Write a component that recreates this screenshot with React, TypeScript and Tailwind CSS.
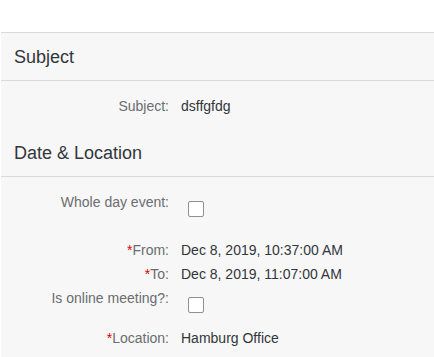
const font = { fontFamily: '"Liberation Sans", Arial, sans-serif' };

function Header({ title, top }: { title: string; top?: boolean }) {
  return (
    <div
      className={`h-[48px] flex items-center pl-[13px] pt-px border-b border-[#d9d9d9] text-[18px] text-[#32363a] ${top ? "border-t h-[49px]" : ""}`}
    >
      {title}
    </div>
  );
}

function Row({ label, value, required, checkbox, h }: { label: string; value?: string; required?: boolean; checkbox?: boolean; h: string }) {
  return (
    <div className={`flex items-start ${h}`}>
      <div className="w-[168px] text-right text-[14px] leading-[24px] text-[#6a6d70] pt-px">
        {required && <span className="text-[#e00000]">*</span>}
        {label}:
      </div>
      <div className="pl-3 text-[14px] leading-[24px] text-[#32363a] pt-px">
        {checkbox ? (
          <div className="mt-[11px] ml-[7px] w-4 h-4 rounded-[2px] border border-[#89919a] bg-white" />
        ) : (
          value
        )}
      </div>
    </div>
  );
}

export default function App() {
  return (
    <div className="w-[434px] h-[357px] bg-white pt-8 pl-px overflow-hidden" style={font}>
      <div className="bg-[#f7f7f7] h-[325px]">
        <Header title="Subject" top />
        <div className="py-3">
          <Row label="Subject" value="dsffgfdg" h="h-6" />
        </div>
        <Header title="Date & Location" />
        <div className="py-3">
          <Row label="Whole day event" checkbox h="h-12" />
          <Row label="From" value="Dec 8, 2019, 10:37:00 AM" required h="h-6" />
          <Row label="To" value="Dec 8, 2019, 11:07:00 AM" required h="h-6" />
          <Row label="Is online meeting?" checkbox h="h-10" />
          <Row label="Location" value="Hamburg Office" required h="h-6" />
        </div>
      </div>
    </div>
  );
}
